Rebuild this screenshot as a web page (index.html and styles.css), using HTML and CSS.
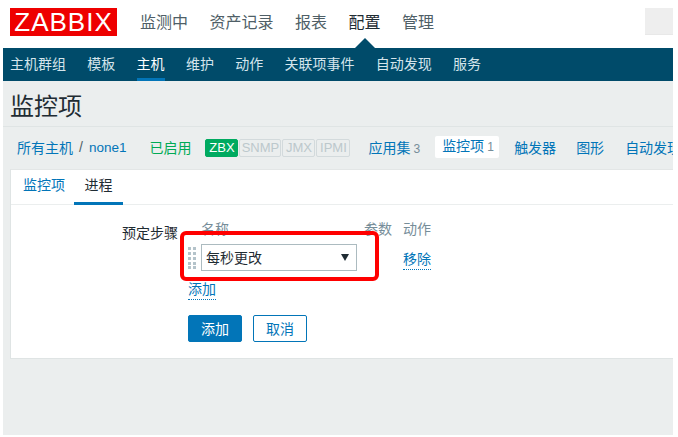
FILE: index.html
```html
<!DOCTYPE html>
<html lang="zh">
<head>
<meta charset="utf-8">
<title>监控项</title>
<link rel="stylesheet" href="styles.css">
</head>
<body>
<div class="page">
  <header class="top">
    <div class="logo">ZABBIX</div>
    <nav class="menu">
      <a>监测中</a><a>资产记录</a><a>报表</a><a class="on">配置</a><a>管理</a>
    </nav>
    <div class="search"></div>
  </header>
  <nav class="sub">
    <a>主机群组</a><a>模板</a><a class="on">主机</a><a>维护</a><a>动作</a><a>关联项事件</a><a>自动发现</a><a>服务</a>
  </nav>
  <main class="content">
    <h1 class="title">监控项</h1>
    <div class="crumbs">
      <a class="link host">所有主机</a><span class="sep">/</span><a class="link none">none1</a>
      <span class="enabled">已启用</span>
      <span class="tags"><b class="tag zbx">ZBX</b><b class="tag snmp">SNMP</b><b class="tag jmx">JMX</b><b class="tag ipmi">IPMI</b></span>
      <a class="link c-app">应用集<i>3</i></a>
      <a class="link c-items">监控项<i>1</i></a>
      <a class="link c-trig">触发器</a>
      <a class="link c-graph">图形</a>
      <a class="link c-disc">自动发现规则</a>
    </div>
    <section class="panel">
      <div class="tabs"><a class="tab">监控项</a><a class="tab on">进程</a></div>
      <div class="form">
        <div class="label">预定步骤</div>
        <div class="field">
          <div class="heads"><span class="h-name">名称</span><span class="h-param">参数</span><span>动作</span></div>
          <div class="step">
            <svg class="grip" width="8" height="22" viewBox="0 0 8 22"><g fill="#b4c3ca"><rect x="0" y="0" width="3" height="3"/><rect x="5" y="0" width="3" height="3"/><rect x="0" y="5" width="3" height="3"/><rect x="5" y="5" width="3" height="3"/><rect x="0" y="10" width="3" height="3"/><rect x="5" y="10" width="3" height="3"/><rect x="0" y="15" width="3" height="3"/><rect x="5" y="15" width="3" height="3"/><rect x="0" y="19" width="3" height="3"/><rect x="5" y="19" width="3" height="3"/></g></svg>
            <div class="select"><span>每秒更改</span><span class="arrow"></span></div>
            <a class="dotted remove">移除</a>
          </div>
          <a class="dotted add">添加</a>
          <div class="buttons"><button class="btn primary">添加</button><button class="btn">取消</button></div>
        </div>
      </div>
    </section>
    <div class="redbox"></div>
  </main>
</div>
</body>
</html>
```
FILE: styles.css
```css
* { box-sizing: border-box; }
html, body { margin: 0; padding: 0; background: #fff; height: 100%; overflow: hidden; }
body { font-family: "Liberation Sans", "Noto Sans CJK SC", sans-serif; font-size: 14px; color: #1f2c33; }
a { display: inline-block; }
.page { margin-left: 3px; width: 670px; height: 435px; background: #ebeeee; overflow: hidden; position: relative; }

.top { height: 48px; background: #fff; display: flex; align-items: flex-start; position: relative; }
.logo { margin: 8px 0 0 7px; width: 107px; height: 28px; background: #e00; color: #fff; font-size: 26px; line-height: 28px; text-align: center; letter-spacing: 1px; }
.menu { display: flex; gap: 21.5px; margin: 11px 0 0 23px; font-size: 16px; line-height: 24px; color: #4f5f67; }
.menu .on { color: #1f2c33; position: relative; }
.menu .on::after { content: ""; position: absolute; left: 6px; top: 27px; border: 10px solid transparent; border-top: 0; border-bottom-color: #004b6a; }
.search { margin: 8px 0 0 auto; width: 28px; height: 27px; background: #eeeeee; border-bottom: 1px solid #e8e8e8; }

.sub { height: 33px; background: #004b6a; display: flex; gap: 21.3px; padding-left: 7px; color: #d5e5ec; line-height: 32px; }
.sub a { height: 33px; white-space: nowrap; }
.sub .on { color: #fff; border-bottom: 3px solid #0275b8; }

.content { position: relative; height: 354px; }
.title { margin: 0; height: 46px; padding: 10px 0 0 7px; font-size: 24px; line-height: 32px; font-weight: 400; color: #1f2c33; border-bottom: 1px solid #dfe4e4; }
.crumbs { height: 42px; display: flex; align-items: center; padding-left: 14px; padding-bottom: 2px; white-space: nowrap; overflow: hidden; }
.link { color: #0275b8; }
.sep { margin: 0 6px 0 6px; color: #4f5f67; }
.none { font-size: 13.5px; }
.enabled { margin-left: 23px; color: #00aa55; }
.tags { display: flex; gap: 1px; margin-left: 14px; margin-top: 2px; }
.tag { height: 18px; font-size: 13px; line-height: 16px; font-weight: 400; text-align: center; color: #bcc8cc; border: 1px solid #d3dadc; border-radius: 2px; background: #ebeeee; }
.zbx { width: 33px; color: #fff; background: #00aa60; border-color: #00aa60; }
.snmp { width: 42px; }
.jmx { width: 33px; }
.ipmi { width: 34px; }
.c-app { margin-left: 18px; }
.c-app i, .c-items i { font-style: normal; color: #768d99; font-size: 12px; margin-left: 3px; }
.c-items { margin-left: 15px; height: 22px; width: 64px; padding: 0 7px; line-height: 21px; background: #fff; border-radius: 2px; }
.c-trig { margin-left: 15px; }
.c-graph { margin-left: 20px; }
.c-disc { margin-left: 21px; }

.panel { margin-left: 7px; height: 190px; background: #fff; border: 1px solid #dfe4e4; border-right: 0; border-top-color: #e3e6e6; }
.tabs { height: 35px; display: flex; border-bottom: 1px solid #ebeeee; }
.tab { width: 63px; padding-left: 12px; height: 35px; line-height: 31px; color: #0275b8; }
.tab.on { width: 49px; padding: 0; text-align: center; color: #1f2c33; border-bottom: 3px solid #0275b8; }

.form { display: flex; }
.label { width: 167px; margin-top: 18px; line-height: 20px; text-align: right; color: #1f2c33; }
.field { margin-left: 10px; width: 260px; }
.heads { display: flex; margin-top: 14px; padding-left: 13px; height: 24px; line-height: 20px; color: #768d99; }
.h-name { width: 163px; }
.h-param { width: 39px; }
.step { display: flex; align-items: center; height: 27px; margin-top: 1px; }
.grip { display: block; flex: none; }
.select { margin-left: 5px; width: 156px; height: 27px; border: 1px solid #acbbc0; padding: 2px 4px 0; display: flex; align-items: center; justify-content: space-between; line-height: 23px; flex: none; }
.arrow { width: 0; height: 0; margin-right: 3px; margin-bottom: 2px; border: 4px solid transparent; border-top: 7px solid #1f2c33; border-bottom: 0; }
.dotted { color: #0275b8; height: 19px; line-height: 17px; border-bottom: 1px dotted #0275b8; }
.remove { margin-left: 46px; flex: none; margin-top: 5px; }
.add { display: block; width: 28px; margin-top: 10px; }
.buttons { display: flex; gap: 11px; margin-top: 15px; }
.btn { width: 54px; height: 27px; padding: 0 0 2px; font: inherit; font-size: 14px; color: #0275b8; background: #fff; border: 1px solid #0275b8; border-radius: 2px; }
.btn.primary { color: #fff; background: #0275b8; }

.redbox { position: absolute; left: 177px; top: 150px; width: 199px; height: 50px; border: 4px solid #f00; border-radius: 6px; }
```
